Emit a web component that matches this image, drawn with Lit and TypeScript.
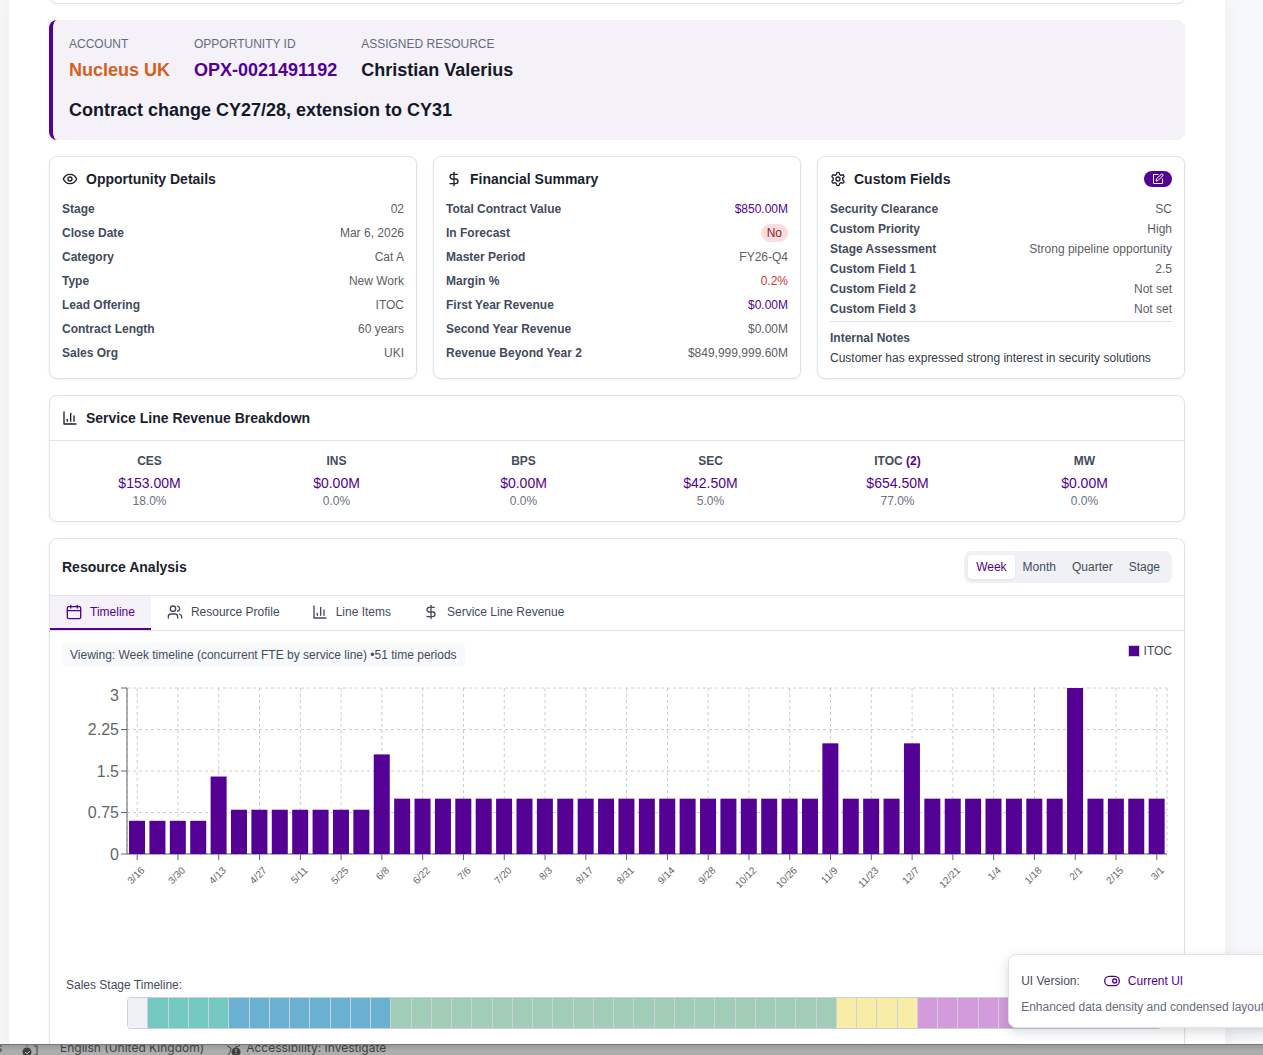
import { LitElement, html, css, svg, nothing } from "lit";
import { customElement, state } from "lit/decorators.js";
import { classMap } from "lit/directives/class-map.js";

type IconName = "eye" | "dollar" | "gear" | "edit" | "chart" | "calendar" | "users" | "toggle";

const ICONS: Record<IconName, unknown> = {
  eye: svg`<path d="M2 12s3-7 10-7 10 7 10 7-3 7-10 7-10-7-10-7Z"/><circle cx="12" cy="12" r="3"/>`,
  dollar: svg`<path d="M12 2v20"/><path d="M17 5H9.500a3.500 3.500 0 0 0 0 7h5a3.500 3.500 0 0 1 0 7H6"/>`,
  gear: svg`<path d="M12.220 2h-.44a2 2 0 0 0-2 2v.18a2 2 0 0 1-1 1.730l-.43.25a2 2 0 0 1-2 0l-.15-.08a2 2 0 0 0-2.730.73l-.22.38a2 2 0 0 0 .73 2.730l.15.1a2 2 0 0 1 1 1.720v.51a2 2 0 0 1-1 1.740l-.15.09a2 2 0 0 0-.73 2.730l.22.38a2 2 0 0 0 2.730.73l.15-.08a2 2 0 0 1 2 0l.43.25a2 2 0 0 1 1 1.730V20a2 2 0 0 0 2 2h.44a2 2 0 0 0 2-2v-.18a2 2 0 0 1 1-1.730l.43-.25a2 2 0 0 1 2 0l.15.08a2 2 0 0 0 2.730-.73l.22-.39a2 2 0 0 0-.73-2.730l-.15-.08a2 2 0 0 1-1-1.740v-.5a2 2 0 0 1 1-1.740l.15-.09a2 2 0 0 0 .73-2.730l-.22-.38a2 2 0 0 0-2.730-.73l-.15.08a2 2 0 0 1-2 0l-.43-.25a2 2 0 0 1-1-1.730V4a2 2 0 0 0-2-2z"/><circle cx="12" cy="12" r="3"/>`,
  edit: svg`<path d="M12 3H3v18h18v-9"/><path d="M18.400 2.600a2.100 2.100 0 0 1 3 3L12 15l-4 1 1-4Z"/>`,
  chart: svg`<path d="M3 3v18h18"/><path d="M18 17V9"/><path d="M13 17V5"/><path d="M8 17v-3"/>`,
  calendar: svg`<rect x="2" y="4" width="20" height="18" rx="2"/><path d="M17 2v4"/><path d="M7 2v4"/><path d="M2 10h20"/>`,
  users: svg`<path d="M16 21v-2a4 4 0 0 0-4-4H6a4 4 0 0 0-4 4v2"/><circle cx="9" cy="7" r="4"/><path d="M22 21v-2a4 4 0 0 0-3-3.870"/><path d="M16 3.130a4 4 0 0 1 0 7.750"/>`,
  toggle: svg`<rect x="1" y="5" width="22" height="14" rx="7"/><circle cx="16" cy="12" r="3"/>`,
};

const icon = (name: IconName, small = false) => html`
  <svg class=${small ? "icon small" : "icon"} viewBox="0 0 24 24" aria-hidden="true">${ICONS[name]}</svg>
`;

interface Field {
  label: string;
  value: string;
  tone?: "brand" | "bad" | "badge";
}

const DETAILS: Field[] = [
  { label: "Stage", value: "02" },
  { label: "Close Date", value: "Mar 6, 2026" },
  { label: "Category", value: "Cat A" },
  { label: "Type", value: "New Work" },
  { label: "Lead Offering", value: "ITOC" },
  { label: "Contract Length", value: "60 years" },
  { label: "Sales Org", value: "UKI" },
];

const FINANCE: Field[] = [
  { label: "Total Contract Value", value: "$850.00M", tone: "brand" },
  { label: "In Forecast", value: "No", tone: "badge" },
  { label: "Master Period", value: "FY26-Q4" },
  { label: "Margin %", value: "0.2%", tone: "bad" },
  { label: "First Year Revenue", value: "$0.00M", tone: "brand" },
  { label: "Second Year Revenue", value: "$0.00M" },
  { label: "Revenue Beyond Year 2", value: "$849,999,999.60M" },
];

const CUSTOM: Field[] = [
  { label: "Security Clearance", value: "SC" },
  { label: "Custom Priority", value: "High" },
  { label: "Stage Assessment", value: "Strong pipeline opportunity" },
  { label: "Custom Field 1", value: "2.5" },
  { label: "Custom Field 2", value: "Not set" },
  { label: "Custom Field 3", value: "Not set" },
];

const SERVICE_LINES = [
  { name: "CES", amount: "$153.00M", share: "18.0%" },
  { name: "INS", amount: "$0.00M", share: "0.0%" },
  { name: "BPS", amount: "$0.00M", share: "0.0%" },
  { name: "SEC", amount: "$42.50M", share: "5.0%" },
  { name: "ITOC", count: 2, amount: "$654.50M", share: "77.0%" },
  { name: "MW", amount: "$0.00M", share: "0.0%" },
];

const TABS: { name: string; icon: IconName }[] = [
  { name: "Timeline", icon: "calendar" },
  { name: "Resource Profile", icon: "users" },
  { name: "Line Items", icon: "chart" },
  { name: "Service Line Revenue", icon: "dollar" },
];

const PERIODS = ["Week", "Month", "Quarter", "Stage"];

const WEEKS = 51;
const PEAKS: Record<number, number> = { 4: 1.4, 12: 1.8, 34: 2, 38: 2, 46: 3 };
const FTE = Array.from({ length: WEEKS }, (_, i) => PEAKS[i] ?? (i < 4 ? 0.6 : i < 12 ? 0.8 : 1));

const WEEK_LABELS = [
  "3/16", "3/30", "4/13", "4/27", "5/11", "5/25", "6/8", "6/22", "7/6", "7/20", "8/3", "8/17", "8/31",
  "9/14", "9/28", "10/12", "10/26", "11/9", "11/23", "12/7", "12/21", "1/4", "1/18", "2/1", "2/15", "3/1",
];

const STAGES: [string, number][] = [
  ["none", 1],
  ["teal", 4],
  ["blue", 8],
  ["green", 22],
  ["yellow", 4],
  ["violet", 12],
];

@customElement("fte-chart")
export class FteChart extends LitElement {
  static styles = css`
    :host {
      display: block;
    }
    .chart {
      display: block;
      width: 100%;
      height: auto;
      font-family: "Liberation Sans", Arial, sans-serif;
    }
    .grid {
      stroke: #ccc;
      stroke-dasharray: 3 3;
    }
    .axis {
      stroke: #666;
    }
    .bar {
      fill: #540094;
    }
    .value {
      fill: #666;
      font-size: 16px;
      text-anchor: end;
    }
    .week {
      fill: #666;
      font-size: 10px;
      text-anchor: end;
    }
  `;

  render() {
    const left = 65;
    const right = 1105;
    const top = 9;
    const base = 175;
    const step = (right - left) / WEEKS;
    const y = (v: number) => base - ((base - top) * v) / 3;
    const center = (i: number) => left + step * (i + 0.5);
    const ticks = [0, 0.75, 1.5, 2.25, 3];
    return html`
      <svg class="chart" viewBox="0 0 1110 290" role="img" aria-label="Concurrent FTE by week">
        ${ticks.map((v) => svg`<line class="grid" x1=${left} x2=${right} y1=${y(v)} y2=${y(v)} />`)}
        ${[left, ...WEEK_LABELS.map((_, i) => center(i * 2)), right].map(
          (x) => svg`<line class="grid" x1=${x} x2=${x} y1=${top} y2=${base} />`,
        )}
        <line class="axis" x1=${left} x2=${right} y1=${base} y2=${base} />
        <line class="axis" x1=${left} x2=${left} y1=${top} y2=${base} />
        ${FTE.map(
          (v, i) => svg`<rect class="bar" x=${left + step * (i + 0.1)} y=${y(v)} width="16" height=${base - y(v)} />`,
        )}
        ${ticks.map(
          (v) => svg`
            <line class="axis" x1=${left - 6} x2=${left} y1=${y(v)} y2=${y(v)} />
            <text class="value" x=${left - 8} y=${Math.max(Math.floor(y(v)) + 6, 22)}>${v}</text>`,
        )}
        ${WEEK_LABELS.map((label, i) => {
          const x = center(i * 2);
          return svg`
            <line class="axis" x1=${x} x2=${x} y1=${base} y2=${base + 6} />
            <text class="week" transform="translate(${x + 8} ${base + 17}) rotate(-45)">${label}</text>`;
        })}
      </svg>
    `;
  }
}

@customElement("app-root")
export class AppRoot extends LitElement {
  @state() private tab = "Timeline";
  @state() private period = "Week";

  static styles = css`
    :host {
      display: flex;
      flex-direction: column;
      position: relative;
      height: 100vh;
      overflow: hidden;
      background: #f7f8fa;
      color: #1c1f2e;
      font: 12px/16px "Liberation Sans", Arial, sans-serif;
    }
    *,
    *::before {
      box-sizing: border-box;
    }
    h2,
    h3,
    p,
    dl,
    dd {
      margin: 0;
    }
    button {
      border: 0;
      margin: 0;
      background: none;
      color: inherit;
      font: inherit;
      cursor: pointer;
    }
    .icon {
      flex: none;
      width: 16px;
      height: 16px;
      fill: none;
      stroke: currentColor;
      stroke-width: 2;
      stroke-linecap: round;
      stroke-linejoin: round;
    }
    .small {
      width: 12px;
      height: 12px;
    }

    .viewport {
      flex: 1;
      min-height: 0;
      overflow: hidden;
      padding: 0 38px 0 9px;
    }
    .page {
      display: flex;
      flex-direction: column;
      gap: 16px;
      min-height: 100%;
      padding: 0 40px;
      background: #fff;
      box-shadow: 0 0 24px rgba(20, 25, 45, 0.05);
    }
    .card {
      border: 1px solid #e1e2e8;
      border-radius: 8px;
      background: #fff;
      box-shadow: 0 1px 3px rgba(20, 25, 45, 0.06);
    }
    .previous {
      height: 20px;
      margin-top: -16px;
    }

    .banner {
      display: flex;
      flex-direction: column;
      gap: 12px;
      padding: 16px;
      border-left: 4px solid #540094;
      border-radius: 8px;
      background: #f4f1f9;
    }
    .facts {
      display: flex;
      gap: 24px;
    }
    .fact {
      display: flex;
      flex-direction: column;
      gap: 4px;
    }
    .caption {
      color: #666b7c;
      text-transform: uppercase;
    }
    .fact-value,
    .title {
      color: #141827;
      font-size: 18px;
      font-weight: 700;
      line-height: 28px;
    }
    .account {
      color: #d75f1c;
    }
    .opportunity {
      color: #540094;
    }

    .trio {
      display: grid;
      grid-template-columns: repeat(3, 1fr);
      gap: 16px;
    }
    .panel {
      display: flex;
      flex-direction: column;
      gap: 12px;
      padding: 12px;
    }
    .heading {
      display: flex;
      align-items: center;
      gap: 8px;
      font-size: 14px;
      font-weight: 700;
      line-height: 20px;
    }
    .panel-top {
      display: flex;
      align-items: center;
      justify-content: space-between;
    }
    .edit {
      display: flex;
      padding: 2px 8px;
      border-radius: 8px;
      background: #540094;
      color: #fff;
    }
    .fields {
      display: flex;
      flex-direction: column;
      gap: 8px;
    }
    .dense {
      gap: 4px;
    }
    .field {
      display: flex;
      justify-content: space-between;
    }
    .label {
      color: #444b5d;
      font-weight: 700;
    }
    .data {
      color: #5c5e66;
    }
    .brand {
      color: #540094;
    }
    .bad {
      color: #d3362d;
    }
    .badge {
      padding: 2px 6px;
      border-radius: 9px;
      background: #fadddd;
      color: #8c1d18;
    }
    .notes {
      display: flex;
      flex-direction: column;
      gap: 4px;
      padding-top: 8px;
      border-top: 1px solid #e1e2e8;
    }
    .note-text {
      color: #333a4c;
    }

    .card-head {
      display: flex;
      align-items: center;
      justify-content: space-between;
      padding: 12px;
      border-bottom: 1px solid #e1e2e8;
    }
    .lines {
      display: grid;
      grid-template-columns: repeat(6, 1fr);
      gap: 12px;
      padding: 12px;
      text-align: center;
    }
    .amount {
      margin-top: 4px;
      color: #540094;
      font-size: 14px;
      line-height: 20px;
    }
    .share {
      color: #6b7080;
    }

    .analysis {
      flex: none;
      margin-bottom: 24px;
    }
    .periods {
      display: flex;
      padding: 4px;
      border-radius: 8px;
      background: #eff1f5;
      color: #444b5d;
    }
    .period {
      padding: 4px 8px;
      border-radius: 4px;
    }
    .period.on {
      background: #fff;
      color: #540094;
      box-shadow: 0 1px 2px rgba(20, 25, 45, 0.08);
    }
    .tabs {
      display: flex;
      border-bottom: 1px solid #e1e2e8;
      color: #444b5d;
    }
    .tab {
      display: flex;
      align-items: center;
      gap: 8px;
      padding: 8px 16px;
      border-bottom: 2px solid transparent;
    }
    .tab.on {
      border-color: #540094;
      background: #f4f1f9;
      color: #540094;
    }
    .timeline {
      display: flex;
      flex-direction: column;
      padding: 12px 12px 32px;
    }
    .summary {
      display: flex;
      align-items: flex-start;
      justify-content: space-between;
      margin-bottom: 12px;
      color: #444b5d;
    }
    .viewing {
      padding: 4px 8px;
      border-radius: 4px;
      background: #f8f9fb;
    }
    .legend {
      display: flex;
      align-items: center;
      gap: 4px;
    }
    .swatch {
      width: 12px;
      height: 12px;
      border: 1px solid #cdd1db;
      background: #540094;
    }
    .stage-title {
      margin: 8px 4px 4px;
      color: #444b5d;
    }
    .stages {
      display: flex;
      height: 32px;
      margin: 0 10px 0 65px;
      overflow: hidden;
      border: 1px solid #cdd1db;
      border-radius: 4px;
    }
    .stage {
      flex: 1;
      border-right: 1px solid #cdd1db;
    }
    .none {
      background: #eff1f5;
    }
    .teal {
      background: #73c9c0;
    }
    .blue {
      background: #6ab0d1;
    }
    .green {
      background: #a1ccb5;
    }
    .yellow {
      background: #f9eca7;
    }
    .violet {
      background: #d39bdb;
    }

    .version {
      position: absolute;
      right: -14px;
      bottom: 27px;
      display: flex;
      flex-direction: column;
      gap: 4px;
      padding: 12px;
      border: 1px solid #e1e2e8;
      border-radius: 8px;
      background: #fff;
      box-shadow: 0 4px 12px rgba(20, 25, 45, 0.16);
    }
    .version-row {
      display: flex;
      align-items: center;
      gap: 12px;
      color: #444b5d;
    }
    .switch {
      display: flex;
      align-items: center;
      gap: 8px;
      padding: 6px 12px;
      color: #540094;
    }
    .version-note {
      color: #666b7c;
      white-space: nowrap;
    }

    .status {
      display: flex;
      align-items: flex-end;
      gap: 4px;
      height: 11px;
      overflow: hidden;
      border-top: 1px solid #777;
      background: linear-gradient(#999, #adadad 6px);
      color: #404040;
      font: 12px/14px Inter, sans-serif;
    }
    .status-icon {
      flex: none;
      width: 16px;
      height: 10px;
    }
    .language {
      margin: 0 18px;
    }
    .clipped {
      width: 22px;
      margin-left: -4px;
    }
  `;

  private renderField(f: Field) {
    return html`
      <div class="field">
        <dt class="label">${f.label}</dt>
        <dd class="data"><span class=${f.tone ?? nothing}>${f.value}</span></dd>
      </div>
    `;
  }

  private renderPanels() {
    return html`
      <div class="trio">
        <section class="card panel">
          <h3 class="heading">${icon("eye")}Opportunity Details</h3>
          <dl class="fields">${DETAILS.map(this.renderField)}</dl>
        </section>
        <section class="card panel">
          <h3 class="heading">${icon("dollar")}Financial Summary</h3>
          <dl class="fields">${FINANCE.map(this.renderField)}</dl>
        </section>
        <section class="card panel">
          <div class="panel-top">
            <h3 class="heading">${icon("gear")}Custom Fields</h3>
            <button class="edit" aria-label="Edit custom fields">${icon("edit", true)}</button>
          </div>
          <div class="fields dense">
            <dl class="fields dense">${CUSTOM.map(this.renderField)}</dl>
            <div class="notes">
              <span class="label">Internal Notes</span>
              <p class="note-text">Customer has expressed strong interest in security solutions</p>
            </div>
          </div>
        </section>
      </div>
    `;
  }

  private renderAnalysis() {
    return html`
      <section class="card analysis">
        <div class="card-head">
          <h3 class="heading">Resource Analysis</h3>
          <div class="periods">
            ${PERIODS.map(
              (p) => html`<button
                class=${classMap({ period: true, on: p === this.period })}
                @click=${() => (this.period = p)}
              >${p}</button>`,
            )}
          </div>
        </div>
        <div class="tabs" role="tablist">
          ${TABS.map(
            (t) => html`<button
              role="tab"
              aria-selected=${t.name === this.tab}
              class=${classMap({ tab: true, on: t.name === this.tab })}
              @click=${() => (this.tab = t.name)}
            >${icon(t.icon)}${t.name}</button>`,
          )}
        </div>
        <div class="timeline">
          <div class="summary">
            <span class="viewing">Viewing: Week timeline (concurrent FTE by service line) •51 time periods</span>
            <span class="legend"><span class="swatch"></span>ITOC</span>
          </div>
          <fte-chart></fte-chart>
          <p class="stage-title">Sales Stage Timeline:</p>
          <div class="stages">
            ${STAGES.map(([name, count]) =>
              Array.from({ length: count }, () => html`<span class="stage ${name}"></span>`),
            )}
          </div>
        </div>
      </section>
    `;
  }

  render() {
    return html`
      <main class="viewport">
        <div class="page">
          <div class="card previous"></div>
          <header class="banner">
            <div class="facts">
              <div class="fact">
                <span class="caption">Account</span>
                <span class="fact-value account">Nucleus UK</span>
              </div>
              <div class="fact">
                <span class="caption">Opportunity ID</span>
                <span class="fact-value opportunity">OPX-0021491192</span>
              </div>
              <div class="fact">
                <span class="caption">Assigned Resource</span>
                <span class="fact-value">Christian Valerius</span>
              </div>
            </div>
            <h2 class="title">Contract change CY27/28, extension to CY31</h2>
          </header>
          ${this.renderPanels()}
          <section class="card">
            <div class="card-head">
              <h3 class="heading">${icon("chart")}Service Line Revenue Breakdown</h3>
            </div>
            <div class="lines">
              ${SERVICE_LINES.map(
                (s) => html`
                  <div>
                    <p class="label">${s.name}${s.count ? html` <span class="brand">(${s.count})</span>` : nothing}</p>
                    <p class="amount">${s.amount}</p>
                    <p class="share">${s.share}</p>
                  </div>
                `,
              )}
            </div>
          </section>
          ${this.renderAnalysis()}
        </div>
      </main>
      <footer class="status">
        <span class="clipped">s</span>
        <svg class="status-icon" viewBox="0 0 16 10" aria-hidden="true">
          <path d="M5 1V0M12 1h3v9h-3" fill="none" stroke="#404040" />
          <circle cx="5" cy="7" r="4.500" fill="#404040" />
          <path d="M3 7l2 2 3-3" fill="none" stroke="#bbb" />
        </svg>
        <span class="language">English (United Kingdom)</span>
        <svg class="status-icon" viewBox="0 0 16 10" aria-hidden="true">
          <path d="M1 1q2 1 4 2q0 4-3 7M14 0q-2 2-5 2" fill="none" stroke="#404040" />
          <circle cx="10" cy="7" r="4.500" fill="#404040" />
          <path d="M10 4v3M10 8v1" fill="none" stroke="#bbb" />
        </svg>
        <span>Accessibility: Investigate</span>
      </footer>
      <aside class="version">
        <div class="version-row">
          <span>UI Version:</span>
          <button class="switch">${icon("toggle")}Current UI</button>
        </div>
        <p class="version-note">Enhanced data density and condensed layout</p>
      </aside>
    `;
  }
}
